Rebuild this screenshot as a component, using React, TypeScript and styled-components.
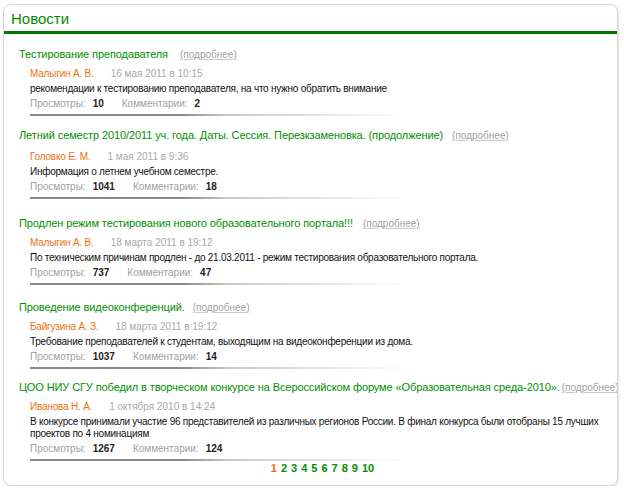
import React from "react";
import styled, { createGlobalStyle } from "styled-components";

const Global = createGlobalStyle`
  html, body { margin: 0; padding: 0; background: #fff; }
  body { font-family: "Liberation Sans", Arial, sans-serif; }
`;

const Panel = styled.div`
  margin: 4px 0 0 3px;
  width: 615px;
  height: 482px;
  border: 1px solid #d6d6d6;
  border-radius: 8px;
  box-shadow: 1px 1px 2px rgba(0, 0, 0, 0.12);
  box-sizing: border-box;
  overflow: hidden;
`;

const Header = styled.div`
  height: 26px;
  border-bottom: 3px solid #047a04;
  padding-left: 7px;
  display: flex;
  align-items: center;
  font-size: 15px;
  color: #008a00;
`;

const List = styled.div`
  padding: 12px 0 0 15px;
  display: flex;
  flex-direction: column;
`;

const Item = styled.div<{ $gap: number }>`
  margin-bottom: ${(p) => p.$gap}px;
`;

const TitleRow = styled.div`
  font-size: 11px;
  letter-spacing: -0.1px;
  line-height: 16px;
  color: #009000;
  white-space: nowrap;
`;

const More = styled.a<{ $gap: number }>`
  margin-left: ${(p) => p.$gap}px;
  font-size: 10px;
  letter-spacing: 0;
  color: #a0a0a0;
  text-decoration: underline;
  text-decoration-color: #c8c8c8;
`;

const Body = styled.div<{ $top: number }>`
  padding: ${(p) => p.$top}px 0 0 11px;
`;

const Meta = styled.div`
  font-size: 10px;
  line-height: 15px;
  display: flex;
  gap: 17px;
`;

const Author = styled.span`
  color: #f07010;
  letter-spacing: -0.2px;
`;

const DateText = styled.span`
  color: #a8a8a8;
`;

const Text = styled.div`
  font-size: 10px;
  letter-spacing: -0.25px;
  line-height: 12px;
  padding: 2px 0 1px;
  color: #111;
  max-width: 576px;
`;

const Stats = styled.div`
  font-size: 10px;
  line-height: 15px;
  display: flex;
`;

const Label = styled.span`
  color: #a0a0a0;
`;

const Value = styled.b`
  color: #222;
  margin: 0 18px 0 7px;
`;

const Sep = styled.div`
  margin-top: 3px;
  height: 2px;
  width: 380px;
  background: linear-gradient(to right, #8a8a8a 0%, #8a8a8a 40%, #c8c8c8 52%, rgba(255,255,255,0) 100%);
`;

const Pager = styled.div`
  display: flex;
  justify-content: center;
  gap: 4px;
  font-size: 11px;
  font-weight: bold;
  line-height: 15px;
  padding-left: 9px;
`;

const Page = styled.a<{ $active?: boolean }>`
  color: ${(p) => (p.$active ? "#f07010" : "#009000")};
  text-decoration: none;
`;

type News = {
  title: string;
  moreGap: number;
  author: string;
  date: string;
  text: string;
  views: string;
  comments: string;
  top: number;
  gap: number;
};

const news: News[] = [
  {
    title: "Тестирование преподавателя",
    moreGap: 12,
    author: "Малыгин А. В.",
    date: "16 мая 2011 в 10:15",
    text: "рекомендации к тестированию преподавателя, на что нужно обратить внимание",
    views: "10",
    comments: "2",
    top: 3,
    gap: 11,
  },
  {
    title: "Летний семестр 2010/2011 уч. года. Даты. Сессия. Перезкзаменовка. (продолжение)",
    moreGap: 9,
    author: "Головко Е. М.",
    date: "1 мая 2011 в 9:36",
    text: "Информация о летнем учебном семестре.",
    views: "1041",
    comments: "18",
    top: 5,
    gap: 16,
  },
  {
    title: "Продлен режим тестирования нового образовательного портала!!!",
    moreGap: 10,
    author: "Малыгин А. В.",
    date: "18 марта 2011 в 19:12",
    text: "По техническим причинам продлен - до 21.03.2011 - режим тестирования образовательного портала.",
    views: "737",
    comments: "47",
    top: 3,
    gap: 14,
  },
  {
    title: "Проведение видеоконференций.",
    moreGap: 8,
    author: "Байгузина А. З.",
    date: "18 марта 2011 в 19:12",
    text: "Требование преподавателей к студентам, выходящим на видеоконференции из дома.",
    views: "1037",
    comments: "14",
    top: 3,
    gap: 10,
  },
  {
    title: "ЦОО НИУ СГУ победил в творческом конкурсе на Всероссийском форуме «Образовательная среда-2010».",
    moreGap: 2,
    author: "Иванова Н. А.",
    date: "1 октября 2010 в 14:24",
    text: "В конкурсе принимали участие 96 представителей из различных регионов России. В финал конкурса были отобраны 15 лучших проектов по 4 номинациям",
    views: "1267",
    comments: "124",
    top: 3,
    gap: 0,
  },
];

export default function App() {
  return (
    <>
      <Global />
      <Panel>
        <Header>Новости</Header>
        <List>
          {news.map((n, i) => (
            <Item key={i} $gap={n.gap}>
              <TitleRow>
                {n.title}
                <More $gap={n.moreGap}>(подробнее)</More>
              </TitleRow>
              <Body $top={n.top}>
                <Meta>
                  <Author>{n.author}</Author>
                  <DateText>{n.date}</DateText>
                </Meta>
                <Text>{n.text}</Text>
                <Stats>
                  <Label>Просмотры:</Label>
                  <Value>{n.views}</Value>
                  <Label>Комментарии:</Label>
                  <Value>{n.comments}</Value>
                </Stats>
                <Sep />
              </Body>
            </Item>
          ))}
          <Pager>
            {Array.from({ length: 10 }, (_, i) => (
              <Page key={i} $active={i === 0}>
                {i + 1}
              </Page>
            ))}
          </Pager>
        </List>
      </Panel>
    </>
  );
}
